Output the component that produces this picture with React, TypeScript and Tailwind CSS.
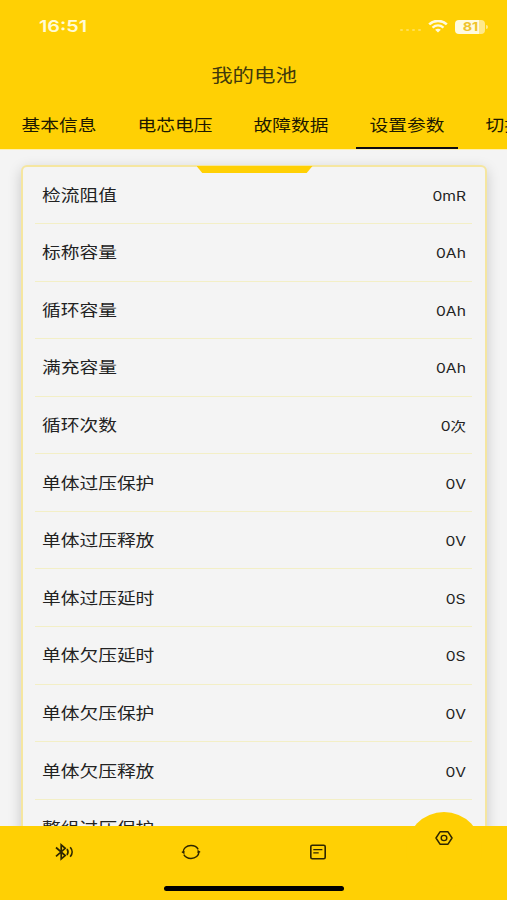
const tabs = ['基本信息', '电芯电压', '故障数据', '设置参数', '切换电池']

const params = [
  { label: '检流阻值', value: '0mR' },
  { label: '标称容量', value: '0Ah' },
  { label: '循环容量', value: '0Ah' },
  { label: '满充容量', value: '0Ah' },
  { label: '循环次数', value: '0次' },
  { label: '单体过压保护', value: '0V' },
  { label: '单体过压释放', value: '0V' },
  { label: '单体过压延时', value: '0S' },
  { label: '单体欠压延时', value: '0S' },
  { label: '单体欠压保护', value: '0V' },
  { label: '单体欠压释放', value: '0V' },
  { label: '整组过压保护', value: '0V' },
]

function StatusBar() {
  return (
    <div className="flex h-[53px] items-center justify-between pl-[39px] pr-[19px]">
      <span className="origin-left scale-x-[1.2] text-[16.5px] font-semibold leading-none text-[#fffbd5]">
        16:51
      </span>
      <div className="flex items-center">
        {/* No signal */}
        <div className="mr-[7px] mt-[7px] flex gap-[3px]">
          {[0, 1, 2, 3].map((dot) => (
            <span key={dot} className="h-[2px] w-[3px] rounded-full bg-[#ffdf52]" />
          ))}
        </div>
        <svg width="20" height="13" viewBox="0 0 20 13" fill="none" stroke="#fffbe0">
          <path d="M1.2 4.4C6.2-.2 13.8-.2 18.8 4.4" strokeWidth="2.6" />
          <path d="M4.5 7.6C7.8 4.7 12.2 4.7 15.5 7.6" strokeWidth="2.3" />
          <path d="M7.1 9.8C8.8 8.4 11.2 8.4 12.9 9.8L10 12.6Z" fill="#fffbe0" stroke="none" />
        </svg>
        {/* Battery */}
        <div className="ml-[7px] flex items-center">
          <div className="flex h-[14px] w-[30px] items-center justify-center overflow-hidden rounded-[4px] bg-linear-to-r from-[#fffbe0] from-81% to-[#ffe98a] to-81%">
            <span className="scale-x-[1.2] text-[12px] font-bold leading-none text-[#efc32c]">81</span>
          </div>
          <span className="ml-[1px] h-[4px] w-[2px] rounded-r-full bg-[#ffe98a]" />
        </div>
      </div>
    </div>
  )
}

function Header() {
  return (
    <header className="h-[150px] shrink-0 overflow-hidden border-b border-[#fff0b0] bg-[#ffd004]">
      <StatusBar />
      <h1 className="flex h-[45px] items-center justify-center text-[18px] text-[#41390c]">
        <span className="scale-x-[1.19]">我的电池</span>
      </h1>
      <nav className="ml-[1px] flex h-[51px]">
        {tabs.map((tab) => (
          <div key={tab} className="flex w-[116px] shrink-0 flex-col items-center">
            <span className="mt-[15px] scale-x-[1.17] text-[16px] leading-[24px] text-[#1c1800]">{tab}</span>
            {tab === '设置参数' && <span className="mt-[10px] h-[2px] w-[102px] bg-[#0b0a12]" />}
          </div>
        ))}
      </nav>
    </header>
  )
}

function TabBar() {
  return (
    <footer className="relative h-[74px] shrink-0 bg-[#ffd004] text-[#2e2600]">
      {/* Raised bump behind the active item */}
      <span className="absolute left-[406px] top-[-14px] h-[76px] w-[76px] rounded-full bg-[#ffd004]" />
      <div className="relative flex h-[52px] items-center">
        <div className="flex w-[127px] justify-center">
          <svg width="20" height="18" viewBox="0 0 20 18" fill="none" stroke="currentColor" strokeWidth="1.7">
            <path d="M2 4.5 11.2 12.6 7.2 16V1.9L11.2 5.3 2 13.4" />
            <path d="M13 6.1C14.2 7.8 14.2 10.2 13 11.9M16.2 4.3C18.7 7.1 18.7 10.9 16.2 13.7" />
          </svg>
        </div>
        <div className="flex w-[127px] justify-center">
          <svg width="20" height="16" viewBox="0 0 20 16" fill="none" stroke="currentColor" strokeWidth="1.4">
            <path d="M2 8.5C2 4.4 5.5 1.5 10 1.5C13.2 1.5 15.9 3 17.2 5.3" />
            <path d="M18 7.5C18 11.6 14.5 14.5 10 14.5C6.8 14.5 4.1 13 2.8 10.7" />
            <path d="M.3 8 3.6 6.8 3.4 10.3ZM19.7 8 16.4 9.2 16.6 5.7Z" fill="currentColor" stroke="none" />
          </svg>
        </div>
        <div className="flex w-[127px] justify-center">
          <svg width="16" height="16" viewBox="0 0 16 16" fill="none" stroke="currentColor" strokeWidth="1.6">
            <rect x=".8" y="1.2" width="14.4" height="13.6" rx="1.5" />
            <path d="M3.3 5.7H12.4M3.3 8.8H8.7" strokeWidth="1.3" />
          </svg>
        </div>
        <div className="mb-[28px] flex w-[126px] justify-center">
          <svg width="18" height="14" viewBox="0 0 18 14" fill="none" stroke="currentColor" strokeWidth="1.5" strokeLinejoin="round">
            <path d="M5 .8H13L17 7 13 13.2H5L1 7Z" />
            <ellipse cx="9" cy="7" rx="2.8" ry="2.6" strokeWidth="1.4" />
          </svg>
        </div>
      </div>
      {/* Home indicator */}
      <div className="relative mx-auto mt-[8px] h-[5px] w-[180px] rounded-full bg-black" />
    </footer>
  )
}

export default function App() {
  return (
    <div className="flex h-[900px] w-[507px] flex-col overflow-hidden bg-[#f4f4f4] font-[Inter,'Noto_Sans_CJK_SC',sans-serif]">
      <Header />
      <main className="min-h-0 flex-1 overflow-hidden px-[20.5px] pt-[15px]">
        <div className="relative h-[760px] rounded-[6px] border-2 border-[#f5e6a0] bg-[#f4f4f4] px-[12.5px] shadow-[0_4px_14px_rgba(0,0,0,0.18)]">
          <span className="absolute left-[174px] top-[-1px] h-[7px] w-[116px] bg-[#ffd004] [clip-path:polygon(0_0,100%_0,95%_100%,5%_100%)]" />
          <div className="-mt-[0.7px]">
            {params.map(({ label, value }) => (
              <div
                key={label}
                className="flex h-[57.6px] items-center justify-between border-b border-[#f3efc6] pl-[7px] pr-[6px] text-[#222]"
              >
                <span className="origin-left scale-x-[1.17] text-[16px] leading-[24px]">{label}</span>
                <span className="mt-[2px] origin-right scale-x-[1.2] text-[13px] leading-[24px]">{value}</span>
              </div>
            ))}
          </div>
        </div>
      </main>
      <TabBar />
    </div>
  )
}
